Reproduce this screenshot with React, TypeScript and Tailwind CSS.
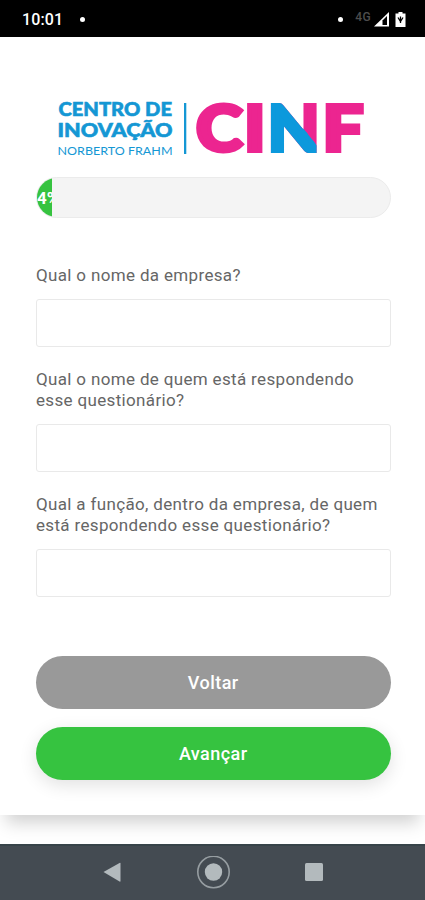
const questions = [
  { id: 'empresa', lines: ['Qual o nome da empresa?'] },
  { id: 'nome', lines: ['Qual o nome de quem está respondendo', 'esse questionário?'] },
  { id: 'funcao', lines: ['Qual a função, dentro da empresa, de quem', 'está respondendo esse questionário?'] },
];

const StatusBar = () => (
  <div className="flex h-[37px] shrink-0 items-center bg-black pl-[22px] pr-[19px] pt-0.5 text-white">
    <span className="text-[16px] font-medium tracking-[0.1px]">10:01</span>
    <span className="ml-[17px] size-[5px] rounded-full bg-white" />
    <span className="ml-auto mr-[12px] size-[5px] rounded-full bg-white" />
    <span className="-mt-1.5 mr-[3px] text-[12px] font-medium tracking-[0.4px] text-[#4d4d4d]">4G</span>
    <svg className="mr-[6px] h-4 w-[15px]" viewBox="0 0 15 16">
      <path d="M0 14.500 15 0V14.500Z" fill="#fff" />
      <path d="M8.500 8.500 13 4V13H8.500Z" fill="#000" />
    </svg>
    <svg className="h-4 w-[11px]" viewBox="0 0 11 16">
      <path d="M3.5 0h4v1.5H10.5V15H.5V1.5h3Z" fill="#fff" />
      <path d="M3 5.5 5.5 9.5 8 5.5M5.5 4.5V11" fill="none" stroke="#000" strokeWidth="1.3" />
    </svg>
  </div>
);

const Logo = () => (
  <svg className="mx-auto block h-[84px] w-[310px]" viewBox="57.500 87 310 84" fontFamily="Lato, sans-serif">
    <defs>
      <clipPath id="n-blue">
        <path d="M266 98H278.500L318 147.500V158H266Z" />
      </clipPath>
    </defs>
    <g fill="#1497d4" stroke="#1497d4" strokeWidth="0.6">
      <text x="58" y="116.300" fontSize="18.300" fontWeight="900" textLength="113.500" lengthAdjust="spacingAndGlyphs">CENTRO DE</text>
      <text x="57" y="137" fontSize="18.300" fontWeight="900" textLength="115" lengthAdjust="spacingAndGlyphs">INOVAÇÃO</text>
      <text x="57" y="154.500" fontSize="12" fontWeight="400" strokeWidth="0" textLength="115" lengthAdjust="spacingAndGlyphs">NORBERTO FRAHM</text>
    </g>
    <rect x="183.500" y="103" width="2.300" height="51" fill="#1497d4" />
    <g fontSize="62.500" fontWeight="900" fill="#ec2590" stroke="#ec2590" strokeWidth="4">
      <text x="195.500" y="151" textLength="46.500" lengthAdjust="spacingAndGlyphs">C</text>
      <text x="243.500" y="151" textLength="21.500" lengthAdjust="spacingAndGlyphs">I</text>
      <text x="267.500" y="151" textLength="51.500" lengthAdjust="spacingAndGlyphs">N</text>
      <text x="267.500" y="151" textLength="51.500" lengthAdjust="spacingAndGlyphs" fill="#0c99dc" stroke="#0c99dc" clipPath="url(#n-blue)">N</text>
      <text x="322" y="151" textLength="41" lengthAdjust="spacingAndGlyphs">F</text>
    </g>
  </svg>
);

const Progress = () => (
  <div className="mt-[6px] h-[41px] overflow-hidden rounded-full border border-[#ebebeb] bg-[#f4f4f4]">
    <div className="flex h-full w-[15px] items-center overflow-hidden bg-[#36c340] pt-0.5 text-[17px] font-bold text-white">4%</div>
  </div>
);

const NavigationBar = () => (
  <div className="mt-auto flex h-14 shrink-0 items-center justify-center border-t-2 border-[#38444a] bg-[#444b52]">
    <svg className="h-[34px] w-[226px]" viewBox="0 0 226 34" fill="#b3babd">
      <path d="M3.500 16 19.500 7Q20.500 6.500 20.500 7.500V25Q20.500 26 19.500 25.500Z" />
      <circle cx="113.500" cy="16" r="15.700" fill="none" stroke="#969da1" strokeWidth="1.600" />
      <circle cx="113.500" cy="16" r="8.700" />
      <rect x="205" y="7" width="18" height="18" rx="1.500" />
    </svg>
  </div>
);

const App = () => {
  return (
    <div className="flex h-[900px] w-[425px] flex-col overflow-hidden bg-white font-['Roboto',sans-serif]">
      <StatusBar />

      <main className="h-[778px] shrink-0 bg-white pl-9 pr-[34.500px] pt-[50px] shadow-[0_14px_16px_-6px_rgba(0,0,0,0.18)]">
        <Logo />
        <Progress />

        <form className="mt-[47px]">
          {questions.map((question) => (
            <div key={question.id} className="mb-[22px]">
              <label htmlFor={question.id} className="block text-[17px] leading-[21px] tracking-[0.34px] text-[#666]">
                {question.lines.map((line) => (
                  <span key={line} className="block whitespace-nowrap">{line}</span>
                ))}
              </label>
              <input id={question.id} className="mt-[13px] block h-12 w-full rounded-[3px] border-[1.500px] border-[#e9e9e9] bg-white px-3" />
            </div>
          ))}

          <button type="button" className="mt-[59px] block h-[53px] w-full rounded-full bg-[#999] text-[18px] font-medium tracking-[0.45px] text-white">
            Voltar
          </button>
          <button type="button" className="mt-[18px] block h-[53px] w-full rounded-full bg-[#36c340] text-[18px] font-medium tracking-[0.45px] text-white shadow-[0_5px_18px_rgba(0,0,0,0.12)]">
            Avançar
          </button>
        </form>
      </main>

      <NavigationBar />
    </div>
  );
};

export default App;
